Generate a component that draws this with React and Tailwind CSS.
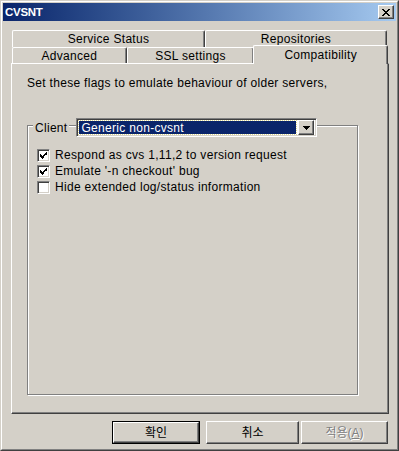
import React from 'react';

// Raised 3D edge used by tabs, buttons and the combo arrow
const raised = 'border-t border-l border-t-white border-l-white border-r border-b border-r-[#404040] border-b-[#404040] shadow-[inset_-1px_-1px_0_#808080]';

function Tab({ label, className = '' }) {
    return (
        <div className={`flex items-center justify-center border-t border-l border-r border-t-white border-l-white border-r-[#404040] rounded-tl-[2px] rounded-tr-[2px] shadow-[inset_-1px_0_0_#808080] ${className}`}>
            {label}
        </div>
    );
}

function CheckRow({ label, checked }) {
    return (
        <div className="flex items-center h-[16px]">
            <div className="w-[13px] h-[13px] bg-white border-t border-l border-[#808080] border-r border-b border-r-white border-b-white shadow-[inset_1px_1px_0_#404040,inset_-1px_-1px_0_#D4D0C8] flex items-center justify-center">
                {checked && (
                    <svg width="7" height="7" viewBox="0 0 7 7" shapeRendering="crispEdges">
                        <path d="M0 2h1v1H0zM0 3h2v1H0zM0 4h3v1H0zM1 5h3v1H1zM2 6h1v1H2zM3 4h1v1H3zM4 3h1v1H4zM5 2h1v1H5zM6 0h1v3H6zM5 1h1v1H5zM4 2h1v1H4zM3 3h1v1H3z" fill="#000" />
                    </svg>
                )}
            </div>
            <span className="ml-[5px]">{label}</span>
        </div>
    );
}

function Button({ children, isDefault, disabled, className = '' }) {
    return (
        <div className={`h-[23px] flex ${isDefault ? 'border border-black' : ''} ${className}`}>
            <div className={`flex-1 flex items-center justify-center ${raised} ${disabled ? 'text-[#808080] [text-shadow:1px_1px_0_#fff]' : 'text-black'}`}>
                {children}
            </div>
        </div>
    );
}

export default function App() {
    return (
        <div className="w-[399px] h-[451px] bg-[#D4D0C8] border border-t-[#D4D0C8] border-l-[#D4D0C8] border-r-[#404040] border-b-[#404040] font-['Liberation_Sans','Noto_Sans_CJK_KR',sans-serif] text-[12px] leading-[16px] tracking-[0.3px] text-black overflow-hidden">
            <div className="h-full flex flex-col border border-t-white border-l-white border-r-[#808080] border-b-[#808080] p-[1px]">
                {/* title bar */}
                <div className="h-[18px] flex items-center justify-between pl-[2px] pr-[2px] bg-gradient-to-r from-[#0A246A] to-[#A6CAF0]">
                    <span className="text-white font-bold text-[11.5px] tracking-[-0.3px]">CVSNT</span>
                    <div className={`w-[16px] h-[14px] bg-[#D4D0C8] flex items-center justify-center ${raised}`}>
                        <svg width="8" height="7" viewBox="0 0 8 7" shapeRendering="crispEdges">
                            <path d="M0 0h2v1H0zM6 0h2v1H6zM1 1h2v1H1zM5 1h2v1H5zM2 2h4v1H2zM3 3h2v1H3zM2 4h4v1H2zM1 5h2v1H1zM5 5h2v1H5zM0 6h2v1H0zM6 6h2v1H6z" fill="#000" />
                        </svg>
                    </div>
                </div>

                <div className="px-[8px] mt-[9px] flex flex-col">
                    {/* back row of tabs */}
                    <div className="flex ml-[1px] h-[17px]">
                        <Tab label="Service Status" className="w-[193px] h-[17px]" />
                        <Tab label="Repositories" className="w-[182px] h-[17px]" />
                    </div>
                    {/* front row of tabs */}
                    <div className="flex ml-[1px] h-[16px] items-start">
                        <Tab label="Advanced" className="w-[115px] h-[16px]" />
                        <Tab label="SSL settings" className="w-[128px] h-[16px]" />
                        <Tab label="Compatibility" className="relative z-10 bg-[#D4D0C8] w-[135px] h-[19px] -mt-[2px] -ml-[1px] items-start pt-[1px]" />
                    </div>

                    {/* tab page */}
                    <div className="w-[378px] h-[351px] border border-t-white border-l-white border-r-[#404040] border-b-[#404040] shadow-[inset_-1px_-1px_0_#808080] pl-[15px] pt-[11px]">
                        <p>Set these flags to emulate behaviour of older servers,</p>

                        <div className="relative mt-[34px] w-[331px] h-[270px] border border-[#808080] shadow-[inset_1px_1px_0_#fff,1px_1px_0_#fff] pl-[9px] pt-[21px]">
                            <div className="absolute -top-[8px] left-[5px] flex items-center h-[19px]">
                                <span className="bg-[#D4D0C8] px-[2px]">Client</span>
                                <div className="ml-[7px] w-[241px] h-[19px] bg-white border-t border-l border-[#808080] border-r border-b border-r-white border-b-white shadow-[inset_1px_1px_0_#404040,inset_-1px_-1px_0_#D4D0C8] flex items-center pl-[2px] pr-[2px]">
                                    <div className="flex-1 h-[13px] bg-[#0A246A] outline outline-1 outline-dotted outline-[#E0D890] text-white flex items-center pl-[2px]">
                                        Generic non-cvsnt
                                    </div>
                                    <div className={`ml-[2px] w-[16px] h-[15px] bg-[#D4D0C8] flex items-center justify-center ${raised}`}>
                                        <svg width="7" height="4" viewBox="0 0 7 4" shapeRendering="crispEdges">
                                            <path d="M0 0h7v1H0zM1 1h5v1H1zM2 2h3v1H2zM3 3h1v1H3z" fill="#000" />
                                        </svg>
                                    </div>
                                </div>
                            </div>

                            <CheckRow label="Respond as cvs 1,11,2 to version request" checked />
                            <CheckRow label="Emulate '-n checkout' bug" checked />
                            <CheckRow label="Hide extended log/status information" />
                        </div>
                    </div>

                    {/* dialog buttons */}
                    <div className="flex justify-end mt-[7px] tracking-normal">
                        <Button isDefault className="w-[88px]">확인</Button>
                        <Button className="w-[93px] ml-[6px]">취소</Button>
                        <Button disabled className="w-[87px] ml-[2px]">
                            <span>적용(<span className="underline">A</span>)</span>
                        </Button>
                    </div>
                </div>
            </div>
        </div>
    );
}
